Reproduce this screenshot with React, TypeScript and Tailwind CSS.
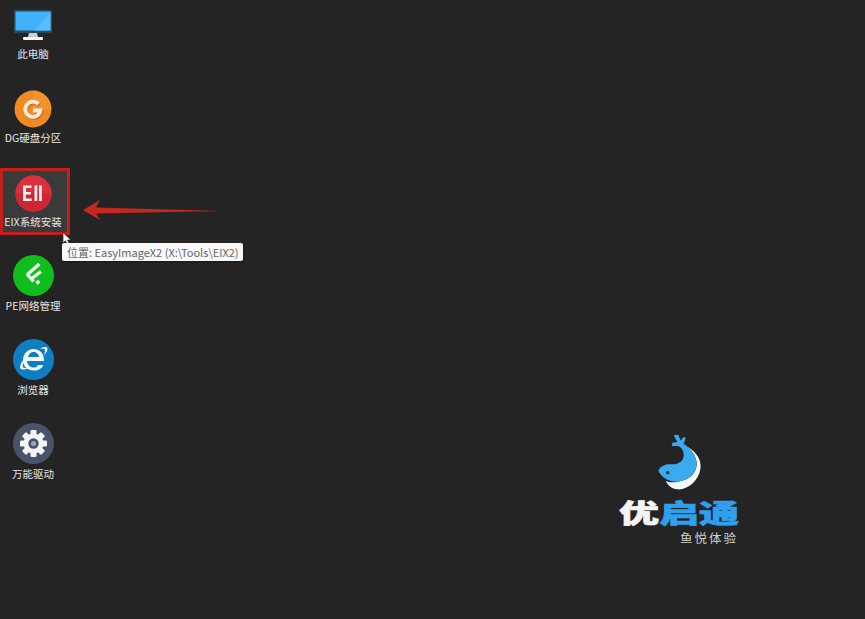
import React from "react";

const font = "font-['Noto_Sans_CJK_SC','Noto_Sans',sans-serif]";

function Monitor() {
  return (
    <svg width="38" height="32" viewBox="0 0 38 32">
      <rect x="0" y="0" width="38" height="23" rx="1" fill="#2b4a5e" />
      <rect x="1.5" y="1.5" width="35" height="19" fill="#3fb2fb" />
      <path d="M20 20.5 L36.5 3 V20.5 Z" fill="#57bdfc" />
      <path d="M15 23 h8 l1 4 h-10 Z" fill="#c9ced2" />
      <rect x="9" y="27" width="20" height="3" rx="1" fill="#f2f2f2" />
    </svg>
  );
}

function GIcon() {
  return (
    <svg width="38" height="38" viewBox="0 0 38 38">
      <circle cx="19" cy="19" r="18.5" fill="#f08a24" />
      <path d="M19 0.5 A18.5 18.5 0 0 1 37.5 19 L19 19 Z" fill="#f39a35" opacity="0.6" />
      <path d="M25.5 15 A7.6 7.6 0 1 0 27.4 21.5 H20" fill="none" stroke="#b5611a" strokeWidth="3.8" opacity="0.7" />
      <path d="M24.5 14 A7.6 7.6 0 1 0 26.4 20.5 H19" fill="none" stroke="#f7ebdd" strokeWidth="3.8" />
    </svg>
  );
}

function EIcon() {
  return (
    <svg width="37" height="37" viewBox="0 0 37 37">
      <circle cx="18.5" cy="18.5" r="18.2" fill="#dc2f3c" />
      <path d="M0.3 18.5 A18.2 18.2 0 0 0 36.7 18.5 Z" fill="#cf2636" />
      <path d="M8 10.5 h8.5 v2.6 h-5.6 v3.8 h5 v2.6 h-5 v4 h5.8 v2.6 H8 Z" fill="#fbeeee" />
      <rect x="19.5" y="10.5" width="2.8" height="15.5" fill="#fbeeee" />
      <rect x="24" y="10.5" width="2.8" height="15.5" fill="#fbeeee" />
    </svg>
  );
}

function FeedIcon() {
  return (
    <svg width="41" height="41" viewBox="0 0 41 41">
      <circle cx="20.5" cy="20.5" r="20.5" fill="#10bd1c" />
      <g stroke="#f2fff2" strokeWidth="3.4" strokeLinecap="butt">
        <path d="M14.3 19.5 L26.3 9" />
        <path d="M14 19 L20.5 26.5" />
        <path d="M18 24 L28 16.5" />
      </g>
      <rect x="23" y="25.5" width="3.6" height="3.6" transform="rotate(45 24.8 27.3)" fill="#f2fff2" />
    </svg>
  );
}

function IeIcon() {
  return (
    <svg width="41" height="41" viewBox="0 0 41 41">
      <circle cx="20.5" cy="20.5" r="20.5" fill="#0f7fc4" />
      <path
        d="M14 22 H31 C31.5 14 26 10 20.5 10 C14.5 10 10 15 10 21 C10 27.5 14.5 31.5 21 31.5 C25.5 31.5 29 29.5 30.5 26 H25 C24 28 22.5 28.5 21 28.5 C17 28.5 14.5 26 14 22 Z M15 18 C15.5 15 18 13 20.5 13 C23 13 26 15 26 18 Z"
        fill="#f4fbff"
        fillRule="evenodd"
      />
      <path d="M27 9.5 C31 7.5 33.5 7.5 34.3 9 C35 10.5 33.5 13.5 31 16.5 C32 13 32.5 10.5 31.5 10 C30.5 9.6 29 9.8 27 9.5 Z" fill="#f4fbff" />
      <path d="M16 15 C9 21 6 27 7.5 29.5 C8.5 31 11.5 31 15.5 29 C12 29.5 10 29 9.7 27.5 C9.4 25 11.5 20 16 15 Z" fill="#f4fbff" />
    </svg>
  );
}

function GearIcon() {
  const teeth = [0, 45, 90, 135, 180, 225, 270, 315];
  return (
    <svg width="41" height="41" viewBox="0 0 41 41">
      <circle cx="20.5" cy="20.5" r="20.5" fill="#4a5468" />
      {teeth.map((a) => (
        <rect key={a} x="17.5" y="7" width="6" height="7" rx="1.2" fill="#f3f4f6" transform={`rotate(${a} 20.5 20.5)`} />
      ))}
      <circle cx="20.5" cy="20.5" r="10" fill="#f3f4f6" />
      <circle cx="20.5" cy="20.5" r="5.2" fill="#4a5468" />
      <circle cx="20.5" cy="20.5" r="2.6" fill="#9aa0ac" />
    </svg>
  );
}

function Item({
  icon,
  label,
  active,
  iconClass,
}: {
  icon: React.ReactNode;
  label: string;
  active?: boolean;
  iconClass: string;
}) {
  return (
    <div className="relative h-[84px] w-[66px] flex flex-col items-center">
      {active && (
        <div className="absolute left-0 top-0 w-[70px] h-[67px] bg-[#3a3a3a] border-[3px] border-[#c1201c]" />
      )}
      <div className={`relative flex items-end justify-center h-[44px] ${iconClass}`}>{icon}</div>
      <div className={`relative mt-[2px] text-[10.5px] leading-[16px] whitespace-nowrap text-[#e8e8e8] ${font}`}>{label}</div>
    </div>
  );
}

function Fish() {
  return (
    <svg width="60" height="62" viewBox="0 0 180 186">
      <path
        d="M108 46 C135 60 160 85 154 118 C148 155 112 182 85 178 C68 176 58 168 50 152 C62 160 75 156 85 155 C115 152 140 135 143 106 C145 80 125 55 104 42 Z"
        fill="#f4f8fb"
      />
      <path
        d="M28 122 C36 106 50 102 70 103 C90 103 106 92 104 72 C103 62 99 55 92 50 L86 48 L68 48 L70 38 L85 36 L74 16 L88 14 L95 32 L104 20 L110 24 L104 42 C125 55 145 80 143 106 C140 135 115 152 85 155 C60 156 38 143 28 122 Z"
        fill="#3aa9ee"
      />
      <circle cx="56" cy="128" r="5" fill="#1f2d3a" />
    </svg>
  );
}

export default function App() {
  return (
    <div className={`relative w-[865px] h-[619px] overflow-hidden bg-[#242424] ${font}`}>
      <div className="flex flex-col">
        <Item icon={<Monitor />} label="此电脑" iconClass="pb-[2px]" />
        <Item icon={<GIcon />} label="DG硬盘分区" iconClass="" />
        <Item icon={<EIcon />} label="EIX系统安装" iconClass="" active />
        <Item icon={<FeedIcon />} label="PE网络管理" iconClass="" />
        <Item icon={<IeIcon />} label="浏览器" iconClass="" />
        <Item icon={<GearIcon />} label="万能驱动" iconClass="" />
      </div>

      {/* red annotation arrow */}
      <svg className="absolute left-[80px] top-[198px]" width="145" height="24" viewBox="0 0 145 24">
        <path d="M3 12 L20 2 L16 9.5 L142 13 L16 15.5 L20 22 Z" fill="#c22a20" />
      </svg>

      {/* cursor */}
      <svg className="absolute left-[62px] top-[232px]" width="11" height="14" viewBox="0 0 11 14">
        <path d="M1 0.5 V11 L3.5 8.8 L5.5 13 L7.5 12 L5.6 8 H9 Z" fill="#ffffff" stroke="#222222" strokeWidth="0.7" />
      </svg>

      {/* tooltip */}
      <div className="absolute left-[62px] top-[243px] h-[18px] w-[181px] rounded-[2px] bg-[#f8f8f8] pl-[5px] text-[11px] leading-[18px] whitespace-nowrap text-[#666666] shadow-[0_1px_2px_rgba(0,0,0,0.4)]">
        位置: EasyImageX2 (X:\Tools\EIX2)
      </div>

      {/* brand logo */}
      <div className="absolute left-[618px] top-[430px] w-[122px] flex flex-col items-center">
        <Fish />
        <div className="mt-[7px] h-[26px] text-[40px] leading-[26px] font-black whitespace-nowrap scale-y-[0.66] [-webkit-text-stroke:1px_currentColor]">
          <span className="text-[#f2f4f6]">优</span>
          <span className="text-[#2f9fee]">启通</span>
        </div>
        <div className="self-end mt-[6px] mr-[2px] text-[12.5px] leading-[14px] tracking-[2px] whitespace-nowrap text-[#d0d0d0]">鱼悦体验</div>
      </div>
    </div>
  );
}
